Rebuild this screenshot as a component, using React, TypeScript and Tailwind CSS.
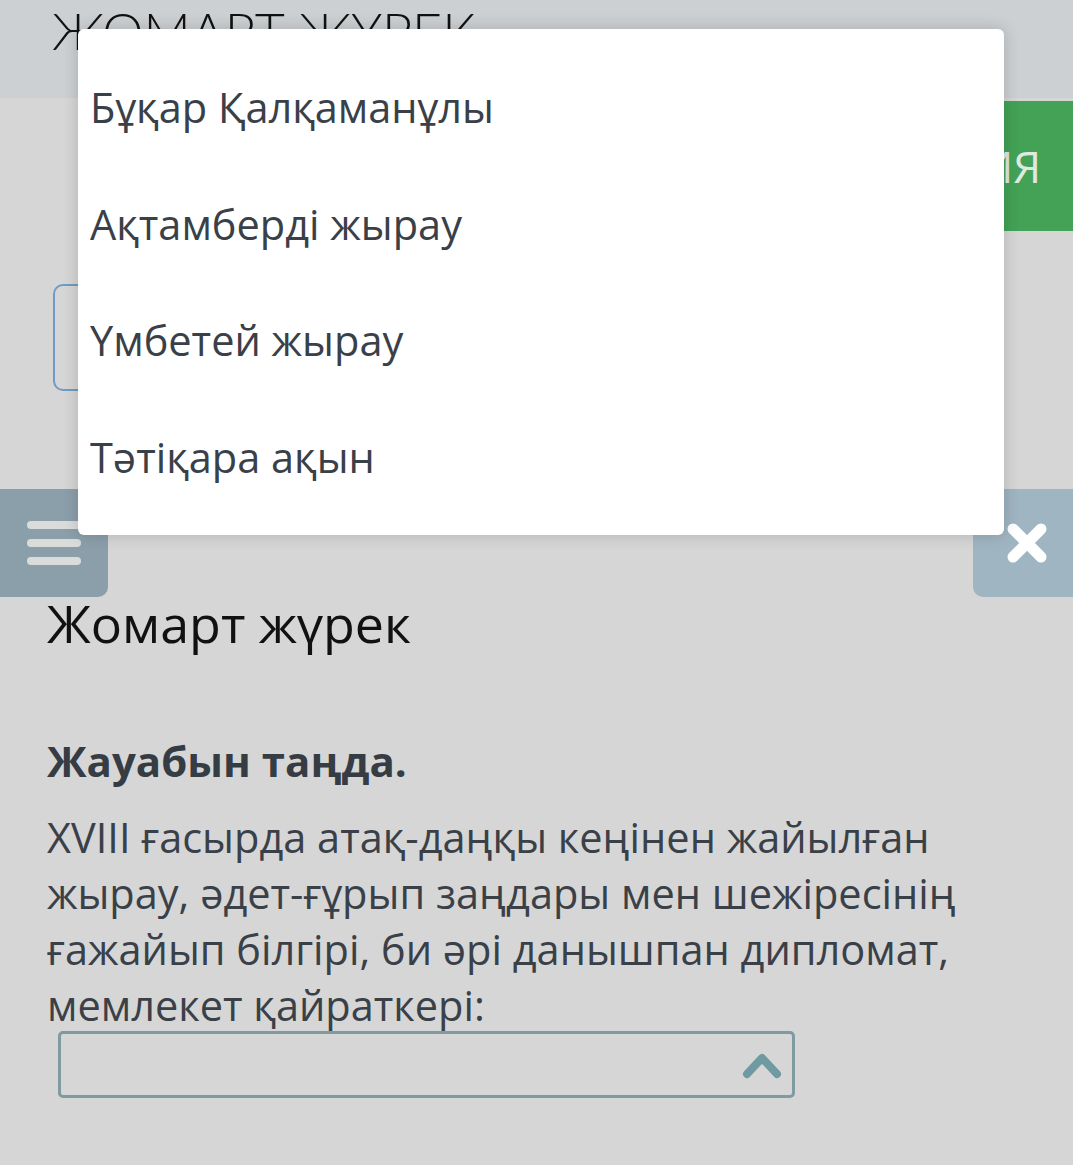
import React from 'react';

const options = ['Бұқар Қалқаманұлы', 'Ақтамберді жырау', 'Үмбетей жырау', 'Тәтіқара ақын'];

const lines = [
  'XVIII ғасырда атақ-даңқы кеңінен жайылған',
  'жырау, әдет-ғұрып заңдары мен шежіресінің',
  'ғажайып білгірі, би әрі данышпан дипломат,',
  'мемлекет қайраткері:',
];

const App: React.FC = () => {
  return (
    <div
      className="relative min-h-[1165px] w-[1073px] overflow-hidden bg-[#d6d6d6]"
      style={{ fontFamily: '"Open Sans", "Noto Sans", sans-serif' }}
    >
      {/* header bar */}
      <div className="h-[98px] overflow-hidden bg-[#cdd0d2] pl-[52px]">
        <div
          className="mt-[4px] whitespace-nowrap text-[52px] font-light uppercase leading-[52px] text-[#111]"
          style={{ fontFamily: 'Lato, "Open Sans", sans-serif' }}
        >
          Жомарт жүрек
        </div>
      </div>

      {/* green action button */}
      <div className="mt-[3px] flex justify-end">
        <div className="flex h-[130px] w-[360px] items-center justify-end bg-[#43a256] pr-[32px] text-[44px] text-[#dfe8e1]">
          ВЕРСИЯ
        </div>
      </div>

      {/* input */}
      <div className="ml-[53px] mt-[53px] h-[107px] w-[930px] rounded-[10px] border-2 border-[#6f9cc2]"></div>

      {/* side buttons */}
      <div className="mt-[98px] flex h-[108px] justify-between">
        <div className="flex w-[108px] flex-col justify-center gap-[10px] rounded-br-[10px] bg-[#8b9fab] pl-[27px]">
          <span className="h-[8px] w-[54px] rounded-sm bg-[#dadbdb]"></span>
          <span className="h-[8px] w-[54px] rounded-sm bg-[#dadbdb]"></span>
          <span className="h-[8px] w-[54px] rounded-sm bg-[#dadbdb]"></span>
        </div>
        <div className="flex w-[100px] items-center justify-center rounded-l-[10px] bg-[#a0b5c2] pl-[8px]">
          <svg width="44" height="44" viewBox="0 0 44 44">
            <path d="M8 8 L36 36 M36 8 L8 36" stroke="#fff" strokeWidth="11" strokeLinecap="round" />
          </svg>
        </div>
      </div>

      {/* content */}
      <div className="px-[47px]">
        <h1 className="-mt-[5px] text-[52px] font-normal leading-[62px] text-[#111]">Жомарт жүрек</h1>
        <div className="mt-[79px] text-[42px] font-bold leading-[56px] text-[#363c44]">Жауабын таңда.</div>
        <div className="mt-[20px] text-[41.5px] leading-[56px] text-[#3a4048]">
          {lines.map((l) => (
            <div key={l} className="whitespace-nowrap">
              {l}
            </div>
          ))}
        </div>
        <div className="ml-[11px] -mt-[2px] flex h-[67px] w-[737px] items-center justify-end rounded-[5px] border-[3px] border-[#7f9aa0] pr-[10px]">
          <svg width="40" height="28" viewBox="0 0 40 28">
            <path d="M5 23 L20 7 L35 23" fill="none" stroke="#6f9aa2" strokeWidth="8" strokeLinecap="round" strokeLinejoin="round" />
          </svg>
        </div>
      </div>

      {/* open dropdown */}
      <div className="absolute left-[78px] top-[29px] z-10 w-[926px] rounded-[6px] bg-white pb-[20px] pt-[20px] shadow-[0_0_16px_rgba(0,0,0,0.18)]">
        {options.map((o) => (
          <div key={o} className="flex h-[116.5px] items-center pl-[12px] text-[41.5px] text-[#3a4048]">
            {o}
          </div>
        ))}
      </div>
    </div>
  );
};

export default App;
